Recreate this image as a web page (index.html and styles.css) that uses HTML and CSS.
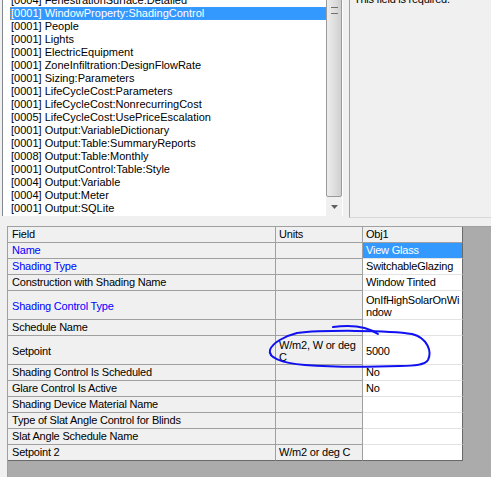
FILE: index.html
```html
<!DOCTYPE html>
<html>
<head>
<meta charset="utf-8">
<link rel="stylesheet" href="styles.css">
</head>
<body>
<div class="app">
  <div class="top">
    <div class="listbox">
      <div class="items">
        <div class="item">[0004] FenestrationSurface:Detailed</div>
        <div class="item sel">[0001] WindowProperty:ShadingControl</div>
        <div class="item">[0001] People</div>
        <div class="item">[0001] Lights</div>
        <div class="item">[0001] ElectricEquipment</div>
        <div class="item">[0001] ZoneInfiltration:DesignFlowRate</div>
        <div class="item">[0001] Sizing:Parameters</div>
        <div class="item">[0001] LifeCycleCost:Parameters</div>
        <div class="item">[0001] LifeCycleCost:NonrecurringCost</div>
        <div class="item">[0005] LifeCycleCost:UsePriceEscalation</div>
        <div class="item">[0001] Output:VariableDictionary</div>
        <div class="item">[0001] Output:Table:SummaryReports</div>
        <div class="item">[0008] Output:Table:Monthly</div>
        <div class="item">[0001] OutputControl:Table:Style</div>
        <div class="item">[0004] Output:Variable</div>
        <div class="item">[0004] Output:Meter</div>
        <div class="item">[0001] Output:SQLite</div>
      </div>
      <div class="vscroll">
        <div class="thumb"><span class="grip"></span></div>
        <div class="arrow">
          <svg width="7" height="4" viewBox="0 0 7 4"><path d="M0 0H7L3.5 4Z" fill="#606060"/></svg>
        </div>
      </div>
    </div>
    <div class="help"><div class="helptext">This field is required.</div></div>
  </div>
  <div class="gridwrap">
    <div class="grid">
      <div class="c f hdr">Field</div><div class="c u hdr">Units</div><div class="c o hdr">Obj1</div>

      <div class="c f blue">Name</div><div class="c u"></div><div class="c o sel">View Glass</div>
      <div class="c f blue">Shading Type</div><div class="c u"></div><div class="c o">SwitchableGlazing</div>
      <div class="c f">Construction with Shading Name</div><div class="c u"></div><div class="c o">Window Tinted</div>
      <div class="c f blue tall">Shading Control Type</div><div class="c u tall"></div><div class="c o tall top">OnIfHighSolarOnWi<br>ndow</div>
      <div class="c f">Schedule Name</div><div class="c u"></div><div class="c o"></div>
      <div class="c f tall">Setpoint</div><div class="c u tall top">W/m2, W or deg C</div><div class="c o tall">5000</div>
      <div class="c f">Shading Control Is Scheduled</div><div class="c u"></div><div class="c o">No</div>
      <div class="c f">Glare Control Is Active</div><div class="c u"></div><div class="c o">No</div>
      <div class="c f">Shading Device Material Name</div><div class="c u"></div><div class="c o"></div>
      <div class="c f">Type of Slat Angle Control for Blinds</div><div class="c u"></div><div class="c o"></div>
      <div class="c f">Slat Angle Schedule Name</div><div class="c u"></div><div class="c o"></div>
      <div class="c f">Setpoint 2</div><div class="c u">W/m2 or deg C</div><div class="c o"></div>
    </div>
  </div>
  <svg class="scribble" width="491" height="477" viewBox="0 0 491 477">
    <path d="M333 327 C348 325 365 325 378 334" fill="none" stroke="#1010f0" stroke-width="2" stroke-linecap="round"/>
    <path d="M297 333 C320 330 390 330 412 334 C428 338 432 352 428 360 C425 365 415 366 400 366 C370 367 330 367 305 365 C280 363 268 357 270 350 C272 343 285 336 297 333 Z" fill="none" stroke="#1010f0" stroke-width="2" stroke-linecap="round" stroke-linejoin="round"/>
  </svg>
</div>
</body>
</html>
```
FILE: styles.css
```css
html, body {
  margin: 0;
  padding: 0;
}
body {
  background: #f0f0f0;
  font-family: "Liberation Sans", Arial, sans-serif;
  font-size: 11px;
  color: #000;
}
.app {
  position: relative;
  width: 491px;
  height: 477px;
  overflow: hidden;
  display: flex;
  flex-direction: column;
}
.top {
  display: flex;
  height: 218px;
  padding-left: 2px;
}
.listbox {
  display: flex;
  width: 339px;
  height: 216px;
  background: #fff;
  border-left: 1px solid #828790;
  border-right: 1px solid #fff;
  overflow: hidden;
}
.items {
  flex: 1;
  margin-top: -6px;
  padding-left: 7px;
}
.item {
  height: 13px;
  line-height: 13px;
  padding-left: 1px;
  white-space: nowrap;
  overflow: hidden;
}
.item.sel {
  background: #3399ff;
  color: #fff;
  outline: 1px dotted #c08040;
  outline-offset: -1px;
}
.vscroll {
  width: 16px;
  display: flex;
  flex-direction: column;
  background: #f0f0f0;
}
.thumb {
  flex: 1;
  margin-top: -4px;
  background: linear-gradient(to right, #ececec, #dcdcdc 60%, #cfcfcf);
  border: 1px solid #9a9a9a;
  border-radius: 2px;
  display: flex;
  justify-content: center;
  align-items: flex-start;
}
.grip {
  display: block;
  margin-top: 10px;
  width: 7px;
  height: 5px;
  border-top: 1px solid #707070;
  border-bottom: 1px solid #707070;
}
.arrow {
  height: 19px;
  display: flex;
  align-items: center;
  justify-content: center;
}
.help {
  flex: 1;
  margin-left: 6px;
  border-left: 1px solid #a0a0a0;
  border-bottom: 1px solid #d8d8d8;
  height: 217px;
  padding-left: 4px;
  overflow: hidden;
}
.helptext {
  margin-top: -7px;
  line-height: 13px;
  letter-spacing: -0.25px;
}
.gridwrap {
  flex: 1;
  margin-top: 8px;
  margin-left: 7px;
  background: #ababab;
  border-top: 1px solid #a0a0a0;
  border-left: 1px solid #a0a0a0;
}
.grid {
  display: grid;
  grid-template-columns: 268px 87px 100px;
  width: 455px;
  letter-spacing: -0.2px;
}
.c {
  height: 15px;
  line-height: 15px;
  padding-left: 3px;
  white-space: nowrap;
  overflow: hidden;
  background: #f0f0f0;
  border-right: 1px solid #a0a0a0;
  border-bottom: 1px solid #a0a0a0;
}
.c.f {
  padding-left: 4px;
}
.c.o {
  background: #fff;
  border-right-color: #696969;
  border-bottom-color: #e3e3e3;
}
.c.o.hdr {
  background: #f0f0f0;
  border-bottom-color: #a0a0a0;
}
.c.o.sel {
  background: #3399ff;
  color: #fff;
}
.blue {
  color: #0000ff;
}
.c.tall {
  height: 28px;
  line-height: 30px;
}
.c.tall.top {
  line-height: 12px;
  padding-top: 3px;
  height: 25px;
  white-space: normal;
}
.grid > .c:nth-last-child(-n+3) {
  border-bottom-color: #696969;
}
.scribble {
  position: absolute;
  left: 0;
  top: 0;
  pointer-events: none;
}
```
